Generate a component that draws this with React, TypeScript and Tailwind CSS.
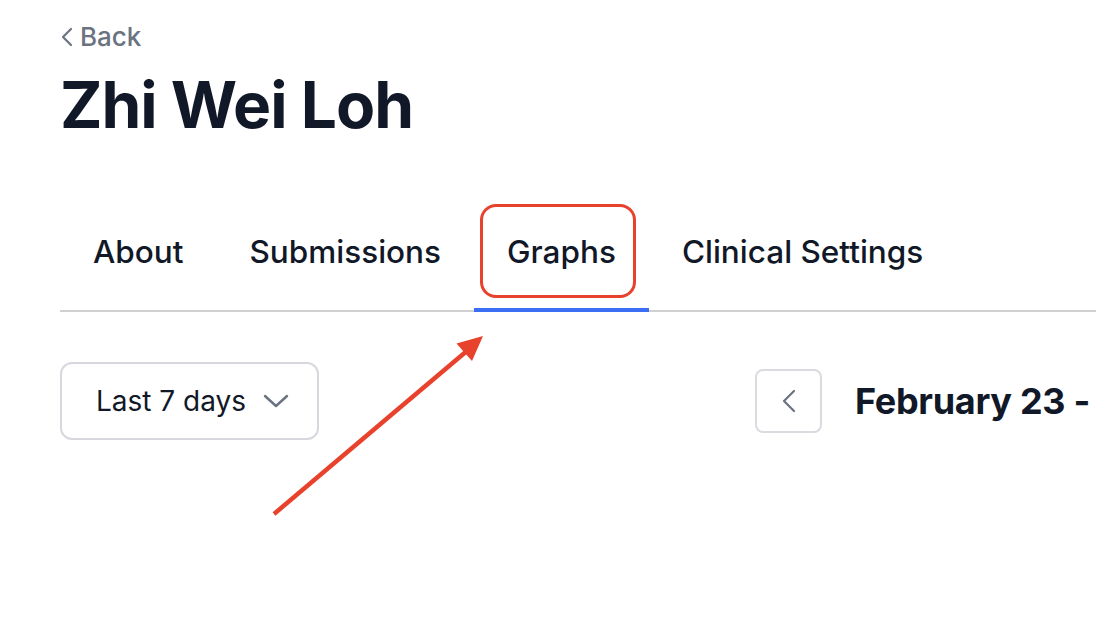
import React from 'react';

const tabs = ['About', 'Submissions', 'Graphs', 'Clinical Settings'];

const PatientGraphs = () => {
  return (
    <div className="relative w-[1096px] h-[634px] overflow-hidden bg-white text-[#111827] font-['Inter','Noto_Sans',sans-serif]">
      <div className="pl-[60px] pt-[20px]">
        <a className="flex items-center gap-[6px] h-[32px] text-[26px] font-medium text-[#6b7280]">
          <svg width="14" height="20" viewBox="0 0 14 20" fill="none" className="mt-[2px]">
            <path d="M11 2 L3 10 L11 18" stroke="#6b7280" strokeWidth="2.2" strokeLinecap="round" strokeLinejoin="round" />
          </svg>
          Back
        </a>
        <h1 className="mt-[21px] text-[64px] leading-[64px] font-bold tracking-[-1px]">Zhi Wei Loh</h1>

        <div className="mt-[95px] flex border-b-2 border-[#d0d0d3]">
          {tabs.map((t) => (
            <div
              key={t}
              className={
                t === 'Graphs'
                  ? 'relative px-[33px] pb-[36px] text-[31.5px] leading-[40px] font-medium border-b-4 border-[#3b6ef3] -mb-[2px]'
                  : 'relative px-[33px] pb-[36px] text-[31.5px] leading-[40px] font-medium border-b-4 border-transparent -mb-[2px]'
              }
            >
              {t}
              {t === 'Graphs' && (
                <div className="absolute top-[-28px] left-[6px] w-[156px] h-[94px] rounded-[16px] border-[3px] border-[#e8412c]" />
              )}
            </div>
          ))}
        </div>

        <div className="mt-[50px] flex items-center whitespace-nowrap">
          <button className="flex items-center gap-[17px] w-[259px] h-[78px] pl-[34px] rounded-[12px] border-2 border-[#d6d8dd] text-[28px]">
            Last 7 days
            <svg width="26" height="14" viewBox="0 0 26 14" fill="none">
              <path d="M2 2 L13 12 L24 2" stroke="#6b7280" strokeWidth="2.4" strokeLinecap="round" strokeLinejoin="round" />
            </svg>
          </button>
          <div className="ml-[436px] flex items-center gap-[33px]">
            <button className="flex items-center justify-center w-[67px] h-[64px] rounded-[8px] border-2 border-[#d9dbe0]">
              <svg width="16" height="24" viewBox="0 0 16 24" fill="none">
                <path d="M13 2 L3 12 L13 22" stroke="#6b7280" strokeWidth="2.2" strokeLinecap="round" strokeLinejoin="round" />
              </svg>
            </button>
            <span className="text-[36px] font-bold tracking-[-0.3px]">February 23 -</span>
          </div>
        </div>
      </div>

      <svg className="absolute left-0 top-0" width="1096" height="634" viewBox="0 0 1096 634" fill="none">
        <line x1="274" y1="514" x2="468" y2="350" stroke="#e8412c" strokeWidth="4.5" />
        <polygon points="483,336 456.5,343.5 472,361" fill="#e8412c" />
      </svg>
    </div>
  );
};

export default function App() {
  return <PatientGraphs />;
}
